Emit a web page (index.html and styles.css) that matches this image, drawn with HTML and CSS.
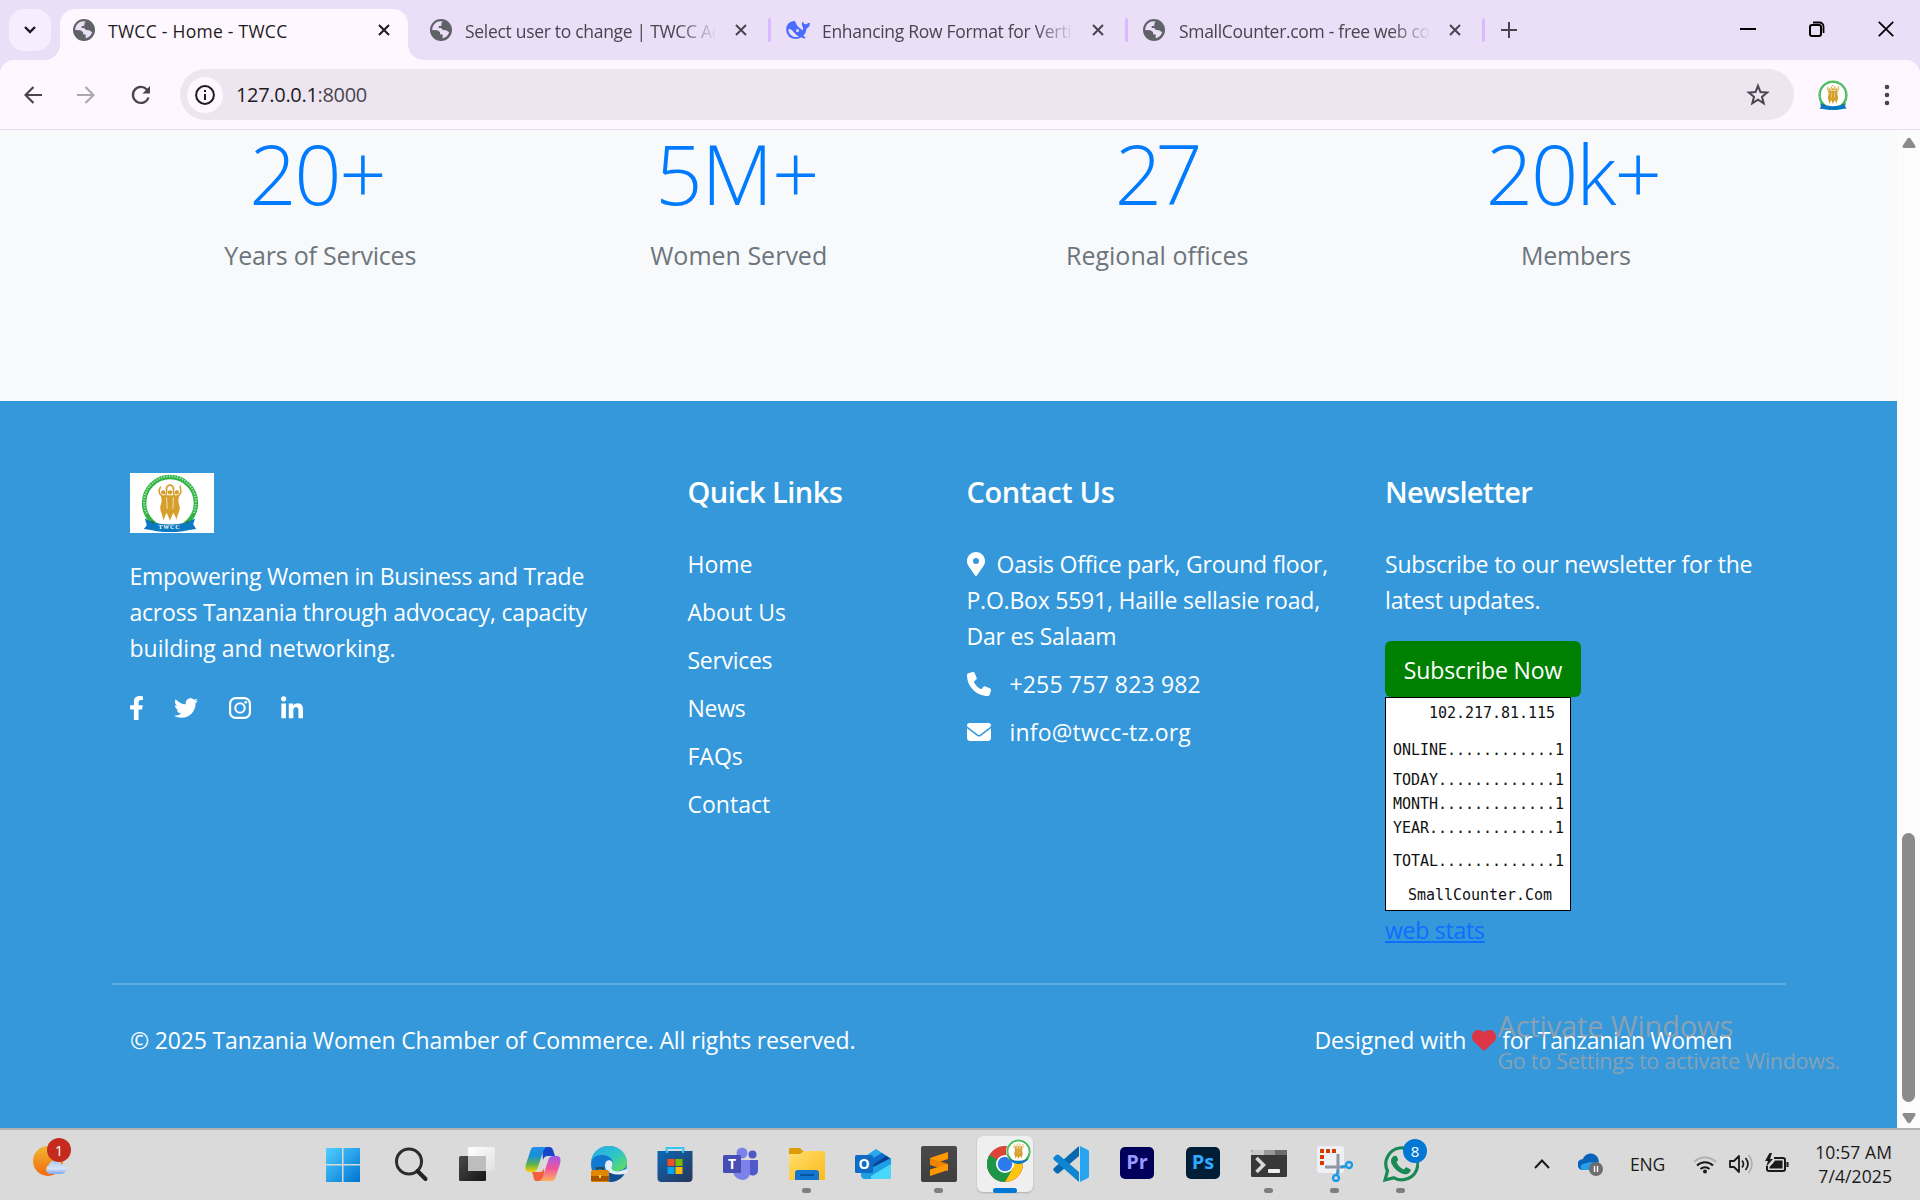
FILE: index.html
```html
<!DOCTYPE html>
<html lang="en">
<head>
<meta charset="utf-8">
<title>TWCC - Home - TWCC</title>
<link rel="stylesheet" href="styles.css">
</head>
<body>
<svg class="defs" width="0" height="0">
  <defs>
    <linearGradient id="gWin" x1="0" y1="0" x2="1" y2="1"><stop offset="0" stop-color="#4fd0ff"/><stop offset="1" stop-color="#0073d1"/></linearGradient>
    <linearGradient id="gSun" x1="0" y1="0" x2="0" y2="1"><stop offset="0" stop-color="#f0b830"/><stop offset="1" stop-color="#f26a10"/></linearGradient>
    <linearGradient id="gCloud" x1="0" y1="0" x2="0" y2="1"><stop offset="0" stop-color="#a9c5f4"/><stop offset=".6" stop-color="#d6e4fb"/><stop offset="1" stop-color="#7fa5e8"/></linearGradient>
    <linearGradient id="gDark" x1="0" y1="0" x2="1" y2="1"><stop offset="0" stop-color="#4a4a4a"/><stop offset="1" stop-color="#161616"/></linearGradient>
    <linearGradient id="gLight" x1="0" y1="0" x2="1" y2="1"><stop offset="0" stop-color="#fff"/><stop offset="1" stop-color="#e0e0e0"/></linearGradient>
    <linearGradient id="gCopA" x1="0" y1="0" x2="0" y2="1"><stop offset="0" stop-color="#2390e8"/><stop offset=".35" stop-color="#1590d8"/><stop offset=".7" stop-color="#62b44b"/><stop offset="1" stop-color="#ffd000"/></linearGradient>
    <linearGradient id="gCopB" x1="0" y1="0" x2="0" y2="1"><stop offset="0" stop-color="#a05ae8"/><stop offset=".5" stop-color="#f0559a"/><stop offset="1" stop-color="#ffb060"/></linearGradient>
    <linearGradient id="gEdge" x1="0" y1="0" x2="1" y2="1"><stop offset="0" stop-color="#2aa9ea"/><stop offset=".5" stop-color="#2cc4c8"/><stop offset="1" stop-color="#6be04a"/></linearGradient>
    <linearGradient id="gStore" x1="0" y1="0" x2="1" y2="1"><stop offset="0" stop-color="#0a68b8"/><stop offset="1" stop-color="#2a3558"/></linearGradient>
    <linearGradient id="gFolder" x1="0" y1="0" x2="1" y2="1"><stop offset="0" stop-color="#ffdf70"/><stop offset="1" stop-color="#fcba18"/></linearGradient>
    <linearGradient id="gSub" x1="0" y1="0" x2="0" y2="1"><stop offset="0" stop-color="#4a4a4a"/><stop offset="1" stop-color="#3e3e3e"/></linearGradient>
    <symbol id="globe" viewBox="0 0 22 22">
      <circle cx="11" cy="11" r="11" fill="#5f6368"/>
      <path d="M12.6 2.2 8.4 2.6C4.6 4 2.2 7.200 2.200 11l5.200.2 2.600 1.800.1 2.200 2.500.200.1 3.900c3-.5 5.600-2.900 6.400-6l-2.900-2.100-3.200-.2-1.900-2H8.700V6.900h2.500l.2-2.400z" fill="#ebdef7"/>
    </symbol>
    <symbol id="close" viewBox="0 0 12 12"><path d="M1 1l10 10M11 1L1 11" fill="none" stroke="currentColor" stroke-width="2"/></symbol>
    <symbol id="seal" viewBox="0 0 60 60">
      <circle cx="30" cy="30" r="26.800" fill="#fff" stroke="#2fb344" stroke-width="4.600"/>
      <path d="M6 41A26.800 26.800 0 1 1 54 41" fill="none" stroke="#fff" stroke-width="2.200" stroke-dasharray="1.300 1.500" stroke-opacity=".6"/>
      <g fill="#d69e2b">
        <circle cx="23" cy="19" r="2.300"/><circle cx="30" cy="19" r="2.300"/><circle cx="37" cy="19" r="2.300"/>
        <path d="M20.500 22h19l-.8 5c-.5 3 1.800 5 1.300 9 0 3-2 5-3 11l-3.500-7L30 48l-3.500-8-3.500 8c-1-7-3-9-3-12-.5-4 1.800-6 1.300-9z"/>
      </g>
      <g fill="none" stroke="#d69e2b" stroke-width="1.600">
        <path d="M22 23c-3-2-4-4-3-7l1.500-3M38 23c3-2 4-4 3-7l-.5-4M25.500 23c1-3 1.500-5 1-8M34.500 23c-1-3-1.500-5-1-8"/>
        <path d="M26 16c1-6 7-6 8 0"/>
      </g>
      <path d="M26.500 24l.5 12M33.500 24l-.5 12" stroke="#fff" stroke-width=".7"/>
      <path d="M4 46l8 4c12 3 24 3 36 0l8-4-2 6 3 5-7 1c-13 3-27 3-40 0l-7-1 3-4z" fill="#0b79c1"/>
      <path d="M9 48l4 1.500v2zM51 48l-4 1.500v2z" fill="#444"/>
    </symbol>
  </defs>
</svg>

<div class="tabstrip">
  <div class="tab-search"><svg width="14" height="10" viewBox="0 0 14 10"><path d="M2 2l5 5 5-5" fill="none" stroke="#1d1b20" stroke-width="2.400"/></svg></div>
  <div class="tab tab-active">
    <svg class="fav" width="22" height="22"><use href="#globe"/></svg>
    <span class="tab-title t1">TWCC - Home - TWCC</span>
    <svg class="tab-x" width="12" height="12"><use href="#close"/></svg>
  </div>
  <div class="tab">
    <svg class="fav" width="22" height="22"><use href="#globe"/></svg>
    <span class="tab-title fade t2">Select user to change | TWCC Admin</span>
    <svg class="tab-x" width="12" height="12"><use href="#close"/></svg>
  </div>
  <div class="tab sep">
    <svg class="fav" width="24" height="20" viewBox="0 0 24 20"><path d="M9 1C3 1 0 5 .2 10c.3 5 4 9 9.300 9 2.500 0 4-.6 5.500-1.700 1.500 1 3.500 1.500 5 .7l-2.700-2.200c2-2 3-4.600 3.200-7.300 2-.6 3.300-2.500 3.500-5.500-1.600-.3-3 .2-3.900 1.500-1.500-.2-2.500-1-3.300-3-1.300 1.700-1.300 3.700 0 5.500.3 1.500.2 2.500-.3 3.500C14 8 11 6 10.500 4.500z" fill="#4d6bfe"/><path d="M2.500 9c4-1 6 6 10.500 7.500C8 18.500 2 15 2.500 9z" fill="#ebdef7"/><circle cx="11.500" cy="10.500" r="1.500" fill="#ebdef7"/></svg>
    <span class="tab-title fade t3">Enhancing Row Format for Vertical</span>
    <svg class="tab-x" width="12" height="12"><use href="#close"/></svg>
  </div>
  <div class="tab sep">
    <svg class="fav" width="22" height="22"><use href="#globe"/></svg>
    <span class="tab-title fade t4">SmallCounter.com - free web counter</span>
    <svg class="tab-x" width="12" height="12"><use href="#close"/></svg>
  </div>
  <div class="new-tab sep"><svg width="16" height="16" viewBox="0 0 16 16"><path d="M8 0v16M0 8h16" stroke="#49454f" stroke-width="2"/></svg></div>
  <div class="win-buttons">
    <svg width="16" height="16" viewBox="0 0 16 16"><path d="M0 8h16" stroke="#000" stroke-width="2"/></svg>
    <svg width="16" height="16" viewBox="0 0 16 16"><rect x="1" y="4" width="11" height="11" rx="2" fill="none" stroke="#000" stroke-width="2"/><path d="M4 1.500h6.500a4 4 0 0 1 4 4V12" fill="none" stroke="#000" stroke-width="1.800"/></svg>
    <svg width="16" height="16" viewBox="0 0 16 16"><path d="M.8.8l14.400 14.400M15.200.8L.8 15.200" stroke="#000" stroke-width="1.800"/></svg>
  </div>
</div>

<div class="toolbar-bg">
  <div class="toolbar">
    <svg width="18" height="18" viewBox="0 0 18 18"><path d="M18 9H2M9.500 1L1.500 9l8 8" fill="none" stroke="#49454f" stroke-width="2.200"/></svg>
    <svg width="18" height="18" viewBox="0 0 18 18"><path d="M0 9h16M8.500 1l8 8-8 8" fill="none" stroke="#aba7af" stroke-width="2.200"/></svg>
    <svg width="20" height="20" viewBox="0 0 20 20"><path d="M17.500 12.500A8 8 0 1 1 15.800 4.500L18 7" fill="none" stroke="#49454f" stroke-width="2.300"/><path d="M19 1v7.500h-7.500z" fill="#49454f"/></svg>
    <div class="omnibox">
      <div class="info"><svg width="20" height="20" viewBox="0 0 20 20"><circle cx="10" cy="10" r="8.900" fill="none" stroke="#1d1b20" stroke-width="2"/><path d="M10 9v6M10 5v2" stroke="#1d1b20" stroke-width="2"/></svg></div>
      <span class="url">127.0.0.1<span class="port">:8000</span></span>
      <svg class="star" width="24" height="23" viewBox="0 0 24 23"><path d="M12 2.800l2.500 6.300 6.700.5-5.200 4.200 1.700 6.500-5.700-3.600-5.700 3.600L8 13.800 2.800 9.600l6.700-.5z" fill="none" stroke="#49454f" stroke-width="2"/></svg>
    </div>
    <svg class="avatar" width="30" height="30"><use href="#seal"/></svg>
    <svg width="6" height="24" viewBox="0 0 6 24"><g fill="#49454f"><circle cx="3" cy="4" r="2.300"/><circle cx="3" cy="12" r="2.300"/><circle cx="3" cy="20" r="2.300"/></g></svg>
  </div>
</div>

<div class="viewport">
  <main class="page">
    <section class="stats">
      <div><p class="num n1">20+</p><p class="label l1">Years of Services</p></div>
      <div><p class="num n2">5M+</p><p class="label">Women Served</p></div>
      <div><p class="num n3">27</p><p class="label">Regional offices</p></div>
      <div><p class="num n4">20k+</p><p class="label l4">Members</p></div>
    </section>
    <footer class="footer">
      <div class="cols">
        <div class="col about">
          <div class="brand"><svg width="60" height="60"><use href="#seal"/></svg><span class="brand-text">TWCC</span></div>
          <p><span class="b1">Empowering Women in Business and Trade</span><br><span class="b2">across Tanzania through advocacy, capacity</span><br>building and networking.</p>
          <div class="social">
            <svg width="15" height="24" viewBox="0 0 320 512"><path d="M279.140 288l14.220-92.660h-88.910v-60.130c0-25.350 12.420-50.060 52.240-50.060h40.420V6.260S260.430 0 225.360 0c-73.220 0-121.080 44.380-121.080 124.720v70.620H22.890V288h81.390v224h100.170V288z"/></svg>
            <svg width="24" height="24" viewBox="0 0 512 512"><path d="M459.370 151.716c.325 4.548.325 9.097.325 13.645 0 138.720-105.583 298.558-298.558 298.558-59.452 0-114.680-17.219-161.137-47.106 8.447.974 16.568 1.299 25.340 1.299 49.055 0 94.213-16.568 130.274-44.832-46.132-.975-84.792-31.188-98.112-72.772 6.498.974 12.995 1.624 19.818 1.624 9.421 0 18.843-1.300 27.614-3.573-48.081-9.747-84.143-51.980-84.143-102.985v-1.299c13.969 7.797 30.214 12.670 47.431 13.319-28.264-18.843-46.781-51.005-46.781-87.391 0-19.492 5.197-37.360 14.294-52.954 51.655 63.675 129.300 105.258 216.365 109.807-1.624-7.797-2.599-15.918-2.599-24.040 0-57.828 46.782-104.934 104.934-104.934 30.213 0 57.502 12.670 76.670 33.137 23.715-4.548 46.456-13.320 66.599-25.340-7.798 24.366-24.366 44.833-46.132 57.827 21.117-2.273 41.584-8.122 60.426-16.243-14.292 20.791-32.161 39.308-52.628 54.253z"/></svg>
            <svg width="22" height="24" viewBox="0 0 22 24"><rect x="1.100" y="2.100" width="19.800" height="19.800" rx="5.500" fill="none" stroke="#fff" stroke-width="2.200"/><circle cx="11" cy="12" r="4.700" fill="none" stroke="#fff" stroke-width="2.100"/><circle cx="16.700" cy="6.300" r="1.400"/></svg>
            <svg width="22" height="24" viewBox="0 0 448 480"><path d="M100.280 448H7.400V148.900h92.880zM53.790 108.100C24.090 108.100 0 83.500 0 53.800a53.790 53.790 0 0 1 107.580 0c0 29.700-24.100 54.300-53.790 54.300zM447.900 448h-92.680V302.400c0-34.700-.7-79.200-48.290-79.200-48.290 0-55.690 37.700-55.690 76.700V448h-92.780V148.900h89.080v40.800h1.300c12.400-23.500 42.690-48.300 87.880-48.300 94 0 111.280 61.900 111.280 142.300V448z"/></svg>
          </div>
        </div>
        <div class="col links">
          <h5 class="h1">Quick Links</h5>
          <a>Home</a><a>About Us</a><a class="tight">Services</a><a class="tight">News</a><a>FAQs</a><a>Contact</a>
        </div>
        <div class="col contact">
          <h5 class="h2">Contact Us</h5>
          <p class="addr"><svg class="ic pin" width="18" height="24" viewBox="0 0 384 512"><path fill-rule="evenodd" d="M172.268 501.670C26.970 291.031 0 269.413 0 192 0 85.961 85.961 0 192 0s192 85.961 192 192c0 77.413-26.970 99.031-172.268 309.670-9.535 13.774-29.930 13.773-39.464 0zM192 256a64 64 0 1 0 0-128 64 64 0 0 0 0 128z"/></svg>Oasis Office park, Ground floor,<br>P.O.Box 5591, Haille sellasie road,<br>Dar es Salaam</p>
          <p class="phone"><svg class="ic" width="24" height="24" viewBox="0 0 512 512"><path d="M164.900 24.600c-7.700-18.600-28-28.500-47.400-23.200l-88 24C12.100 30.200 0 46 0 64C0 311.400 200.600 512 448 512c18 0 33.800-12.100 38.600-29.500l24-88c5.300-19.400-4.600-39.700-23.200-47.400l-96-40c-16.300-6.800-35.200-2.100-46.300 11.600L304.700 368C234.300 334.700 177.300 277.700 144 207.300L193.300 167c13.700-11.200 18.400-30 11.600-46.300l-40-96z"/></svg>+255 757 823 982</p>
          <p class="mail"><svg class="ic" width="24" height="24" viewBox="0 0 512 512"><path d="M48 64C21.500 64 0 85.500 0 112c0 15.100 7.100 29.300 19.200 38.400L236.800 313.600c11.400 8.500 27 8.500 38.400 0L492.800 150.400c12.100-9.100 19.200-23.300 19.200-38.400c0-26.500-21.500-48-48-48H48zM0 176V384c0 35.300 28.700 64 64 64H448c35.300 0 64-28.700 64-64V176L294.400 339.200c-22.800 17.100-54 17.100-76.800 0L0 176z"/></svg>info@twcc-tz.org</p>
        </div>
        <div class="col news">
          <h5 class="h3">Newsletter</h5>
          <p>Subscribe to our newsletter for the<br>latest updates.</p>
          <div class="btn">Subscribe Now</div>
          <div class="counter">
            <div class="ip">102.217.81.115</div>
            <div class="online">ONLINE............1</div>
            <div class="today">TODAY.............1</div>
            <div>MONTH.............1</div>
            <div>YEAR..............1</div>
            <div class="total">TOTAL.............1</div>
            <div class="site">SmallCounter.Com</div>
          </div>
          <a class="webstats">web stats</a>
        </div>
      </div>
      <div class="bottom">
        <span class="copy">© 2025 Tanzania Women Chamber of Commerce. All rights reserved.</span>
        <span class="made">Designed with <svg class="heart" width="24" height="24" viewBox="0 0 512 512"><path fill="#dc3545" d="M47.600 300.400L228.300 469.100c7.500 7 17.400 10.900 27.700 10.900s20.200-3.900 27.700-10.900L464.400 300.400c30.400-28.300 47.600-68 47.600-109.500v-5.800c0-69.900-50.500-129.500-119.400-141C347 36.500 300.600 51.400 268 84L256 96 244 84c-32.600-32.600-79-47.500-124.600-39.900C50.500 55.600 0 115.200 0 185.100v5.800c0 41.500 17.200 81.200 47.600 109.500z"/></svg> <span class="for">for Tanzanian Women</span></span>
      </div>
    </footer>
  </main>
  <div class="scrollbar">
    <svg width="14" height="12" viewBox="0 0 14 12"><path d="M5.500 1.500Q7 0 8.500 1.500L13.500 9Q14 11 12 11H2Q0 11 .5 9z" fill="#8b8b8b"/></svg>
    <div class="thumb"></div>
    <svg width="14" height="12" viewBox="0 0 14 12"><path d="M5.500 10.500Q7 12 8.500 10.500L13.500 3Q14 1 12 1H2Q0 1 .5 3z" fill="#8b8b8b"/></svg>
  </div>
  <div class="watermark"><div class="wm1">Activate Windows</div><div class="wm2">Go to Settings to activate Windows.</div></div>
</div>

<div class="taskbar">
  <div class="weather">
    <svg width="36" height="44" viewBox="0 0 36 44"><circle cx="15" cy="26" r="15" fill="url(#gSun)"/><path d="M16 39a5 5 0 0 1 0-9c1-6 11-6 12-1 6 0 7 9 1 10z" fill="url(#gCloud)"/></svg>
    <span class="badge red">1</span>
  </div>
  <div class="apps">
    <div class="app"><svg viewBox="0 0 36 36"><path d="M0 2h16v16H0zM17.500 2H34v16H17.500zM0 19.500h16V36H0zM17.500 19.500H34V36H17.500z" fill="url(#gWin)"/></svg></div>
    <div class="app"><svg viewBox="0 0 36 36"><circle cx="16" cy="15.500" r="12.500" fill="none" stroke="#2c2c2c" stroke-width="3"/><path d="M24.500 25l8 8" stroke="#222" stroke-width="4" stroke-linecap="round"/></svg></div>
    <div class="app"><svg viewBox="0 0 36 36"><rect y="10" width="27" height="25" rx="1.500" fill="url(#gDark)"/><rect x="9" y="1" width="27" height="24" rx="1.500" fill="url(#gLight)"/><path d="M9 10h18v15H9z" fill="#bdbdbd"/></svg></div>
    <div class="app"><svg viewBox="0 0 36 36"><path d="M17 1h7c3 0 4 2 5 6l1 3h-7c-3 0-4 1-5 4z" fill="#1745c8"/><path d="M19 35h-7c-3 0-3-2-4-6l-1-3h7c3 0 4-1 5-4z" fill="#f2603c"/><path d="M10 1h12c-3 1-4 4-5 8l-4 12c-1 4-3 5-6 5H4c-4 0-4-4-3-8l4-12c1-4 2-5 5-5z" fill="url(#gCopA)"/><path d="M26 35H14c3-1 4-4 5-8l4-12c1-4 3-5 6-5h3c4 0 4 4 3 8l-4 12c-1 4-2 5-5 5z" fill="url(#gCopB)"/></svg></div>
    <div class="app"><svg viewBox="0 0 36 36"><circle cx="18" cy="18" r="18" fill="#1179d0"/><path d="M0 15C2 4 10 0 18 0c11 0 18 8 18 16 0 7-6 9-11 9-4 0-6-2-4-5 3-6-3-11-9-11C6 9 2 11 0 15z" fill="url(#gEdge)"/><path d="M18 25c5 4 11 4 16 2-3 6-9 9-15 9z" fill="#114c91"/><path d="M14 20c0-9 10-6 7 0-2 4 2 6 8 5l7-2v4c-10 4-22 0-22-7z" fill="#e4eff5"/><rect y="24" width="18" height="12" rx="1.500" fill="#e08600"/><path d="M0 30h18v5H0z" fill="#a95500"/><path d="M6 24v-2h6v2" fill="none" stroke="#3b3327" stroke-width="1.500"/><path d="M8 29h2v3H8z" fill="#ffd43b"/></svg></div>
    <div class="app"><svg viewBox="0 0 36 36"><path d="M9.500 8V2h17v6" fill="none" stroke="#35c5f1" stroke-width="2"/><path d="M.5 5h35v27a4 4 0 0 1-4 4h-27a4 4 0 0 1-4-4z" fill="url(#gStore)"/><path d="M9 5h2v2H9zM25 5h2v2h-2z" fill="#35c5f1"/><path d="M10.500 13h7v7h-7z" fill="#f25022"/><path d="M18.500 13h7v7h-7z" fill="#7fba00"/><path d="M10.500 21h7v7h-7z" fill="#00a4ef"/><path d="M18.500 21h7v7h-7z" fill="#ffb900"/></svg></div>
    <div class="app"><svg viewBox="0 0 36 36"><circle cx="19" cy="7" r="5.500" fill="#7b83eb"/><circle cx="29.500" cy="8.500" r="4" fill="#5059c9"/><path d="M24 14h11v10c0 7-9 7-11 2z" fill="#5059c9"/><path d="M10 14h17v12c0 11-15 10-17 0z" fill="#7b83eb"/><rect y="9" width="18" height="18" rx="1.500" fill="#474db5"/></svg><b class="gl teams">T</b></div>
    <div class="app run"><svg viewBox="0 0 36 36"><path d="M0 3.500A1.500 1.500 0 0 1 1.500 2H11l4 4-3 4H0z" fill="#dc9d05"/><path d="M0 8h11l4-3h21v29H0z" fill="url(#gFolder)"/><path d="M6 34v-7a3 3 0 0 1 3-3h18a3 3 0 0 1 3 3v7z" fill="#1275cf"/><path d="M11 29h14" stroke="#0a4f96" stroke-width="1.800"/></svg></div>
    <div class="app"><svg viewBox="0 0 36 36"><path d="M6 13L21 3l14 9v6L18 30 6 25z" fill="#28a8ea"/><path d="M15 14l12-7 9 6v5l-17 8z" fill="#0c6acb"/><path d="M18 19l13-9 5 3v5l-16 8z" fill="#063f91"/><path d="M6 27l30-15v17c0 3-1 4-4 4H10c-3 0-4-2-4-4z" fill="#1f9ee5"/><path d="M16 30l20-12v11c0 3-1 4-4 4H16z" fill="#49d8fb"/><rect y="9" width="18" height="18" rx="1.500" fill="#0f6cc5"/></svg><b class="gl teams">O</b></div>
    <div class="app run"><svg viewBox="0 0 36 36"><rect width="36" height="36" rx="2" fill="url(#gSub)"/><path d="M9 12l18-6v7l-18 6z" fill="#ff9800"/><path d="M9 12l18 6v7L9 19z" fill="#ef8400"/><path d="M9 23.500l18-5.500v6L9 30z" fill="#ff9800"/></svg></div>
    <div class="app active"><svg viewBox="0 0 36 36"><circle cx="18" cy="18" r="18" fill="#db4437"/><path d="M18 18L2.400 9A18 18 0 0 0 18 36l8-13z" fill="#1e9648"/><path d="M18 10h16A18 18 0 0 1 18 36l8-14z" fill="#fdc50f"/><circle cx="18" cy="18" r="9" fill="#fff"/><circle cx="18" cy="18" r="7.300" fill="#3079ed"/></svg><svg class="mini" viewBox="0 0 60 60"><use href="#seal"/></svg></div>
    <div class="app"><svg viewBox="0 0 36 36"><path d="M26 0v10L6 27c-1 .8-2 .6-3 0l-2-2c-1-1-1-2 0-3z" fill="#0869b1"/><path d="M26 36V26L6 9C5 8.200 4 8.400 3 9l-2 2c-1 1-1 2 0 3z" fill="#0e85d0"/><path d="M27 0l8 4c.7.400 1 1 1 2v24c0 1-.3 1.600-1 2l-8 4z" fill="#26a4ef"/></svg></div>
    <div class="app"><svg viewBox="0 0 36 36"><rect x="1" y="1" width="34" height="32" rx="5" fill="#00005b"/></svg><b class="gl pr">Pr</b></div>
    <div class="app"><svg viewBox="0 0 36 36"><rect x="1" y="1" width="34" height="32" rx="5" fill="#001e36"/></svg><b class="gl ps">Ps</b></div>
    <div class="app run"><svg viewBox="0 0 36 36"><rect y="4" width="36" height="27" rx="1.500" fill="#383838"/><path d="M1.500 4H13v5H0V5.500z" fill="#c8c8c8"/><path d="M13 4h11v5H13z" fill="#999"/><path d="M24 4h12v5H24z" fill="#6b6b6b"/><path d="M5.500 12l7 7-7 7" fill="none" stroke="#d8d8d8" stroke-width="3.500"/><rect x="17" y="23" width="12" height="4" rx="1" fill="#eee"/></svg></div>
    <div class="app run"><svg viewBox="0 0 36 36"><rect width="27" height="27" rx="3" fill="#eef0f3"/><path d="M5 19V5h15" fill="none" stroke="#d83b01" stroke-width="4" stroke-dasharray="4 2"/><path d="M21 8v20M8 21h20" stroke="#8d96a2" stroke-width="3"/><circle cx="32" cy="19" r="3" fill="none" stroke="#1c9be6" stroke-width="2.400"/><circle cx="19" cy="32" r="3" fill="none" stroke="#1c9be6" stroke-width="2.400"/><path d="M24 21l5-1M21 24l-1 5" stroke="#1c9be6" stroke-width="2.400"/></svg></div>
    <div class="app run"><svg viewBox="0 0 36 36"><path d="M2 34l2.500-9A16 16 0 1 1 11 31.800z" fill="none" stroke="#1a8a55" stroke-width="3.200"/><path d="M11 10c2-1 3 0 4 3 .5 1-.5 2-1.500 3 2 4 4 6 7.500 7.500 1.500-2 2-2.500 3-2 4 2 4.500 2 3 4.500-3 4-8 2-11 0-5-3-12-12-5-16z" fill="#1a8a55"/></svg><span class="badge blue">8</span></div>
  </div>
  <div class="tray">
    <svg class="chev" width="16" height="10" viewBox="0 0 16 10"><path d="M1 9l7-7.500L15 9" fill="none" stroke="#1a1a1a" stroke-width="2"/></svg>
    <svg class="drive" width="26" height="26" viewBox="0 0 26 26"><path d="M5 19a5.500 5.500 0 0 1 0-11c2-6 11-8 15-1l1 4-10 8z" fill="#0864b8"/><path d="M5 19c-3-1-3-5 0-6l7-2 11 2v6z" fill="#28a0e8"/><circle cx="18" cy="18" r="7" fill="#6e6e6e"/><path d="M16.500 15v6M19.500 15v6" stroke="#fff" stroke-width="1.400"/></svg>
    <span class="lang">ENG</span>
    <svg class="wifi" width="24" height="22" viewBox="0 0 24 22"><path d="M1 9a15.500 15.500 0 0 1 22 0" fill="none" stroke="#b0b0b0" stroke-width="2"/><path d="M4 12.500a11.500 11.500 0 0 1 16 0M7.500 16a6.500 6.500 0 0 1 9 0" fill="none" stroke="#1a1a1a" stroke-width="2"/><circle cx="12" cy="18.500" r="2" fill="#1a1a1a"/></svg>
    <svg class="vol" width="25" height="22" viewBox="0 0 25 22"><path d="M1 8h4l5-5v16l-5-5H1z" fill="none" stroke="#1a1a1a" stroke-width="1.800" stroke-linejoin="round"/><path d="M13 7.500q3 3.500 0 7M16.500 5q5 6 0 12" fill="none" stroke="#1a1a1a" stroke-width="1.700"/><path d="M19.500 2q7 9 0 18" fill="none" stroke="#b0b0b0" stroke-width="1.700"/></svg>
    <svg class="bat" width="26" height="22" viewBox="0 0 26 22"><path d="M10 5h9a2 2 0 0 1 2 2v9a2 2 0 0 1-2 2H5a2 2 0 0 1-2-2v-3" fill="none" stroke="#1a1a1a" stroke-width="2"/><path d="M11 7.500h7.500v8H5.500V14L10 9zM22.500 9h2v5h-2z" fill="#1a1a1a"/><path d="M5.500 0L1 8h3l-2 6 7-8H6l2-6z" fill="#1a1a1a"/></svg>
    <div class="clock"><div class="time">10:57 AM</div><div class="date">7/4/2025</div></div>
  </div>
</div>
</body>
</html>
```
FILE: styles.css
```css
* { box-sizing: border-box; margin: 0; padding: 0; }
body {
  width: 1920px; height: 1200px; overflow: hidden;
  display: flex; flex-direction: column;
  font-family: "Open Sans", "Noto Sans", sans-serif;
  background: #ebdef7;
}
.defs { position: absolute; }
svg { display: block; flex: none; }

/* browser tabs */
.tabstrip { height: 60px; flex: none; display: flex; align-items: flex-start; padding: 9px 0 0 9px; }
.tab-search { width: 42px; height: 42px; margin-right: 9px; border-radius: 15px; background: #f8edff; display: flex; align-items: center; justify-content: center; }
.tab { position: relative; width: 357px; height: 42px; display: flex; align-items: center; padding-left: 22px; color: #49454f; }
.tab-active { width: 348px; height: 51px; padding: 0 0 9px 13px; background: #fef7ff; border-radius: 15px 15px 0 0; color: #1d1b20; }
.tab-active::before, .tab-active::after { content: ""; position: absolute; bottom: 0; width: 15px; height: 15px; }
.tab-active::before { left: -15px; background: radial-gradient(circle at 0 0, transparent 14.5px, #fef7ff 15px); }
.tab-active::after { right: -15px; background: radial-gradient(circle at 100% 0, transparent 14.5px, #fef7ff 15px); }
.sep::before { content: ""; position: absolute; left: 0; top: 9px; width: 3px; height: 24px; border-radius: 2px; background: #d9b9ff; }
.tab-active + .tab { width: 360px; }
.sep .fav { margin-left: -4px; }
.fav { margin-right: 13px; }
.tab-title { width: 250px; font-size: 17.5px; line-height: 24px; white-space: nowrap; overflow: hidden; letter-spacing: -.3px; padding-top: 1px; }
.tab-active .tab-title { width: 270px; letter-spacing: .27px; }
.t3 { margin-left: -1px; }
.t4 { margin-left: 1px; }
.fade { -webkit-mask-image: linear-gradient(90deg, #000 85%, transparent 101%); mask-image: linear-gradient(90deg, #000 85%, transparent 101%); }
.tab-x { margin-left: 20px; }
.tab-active .tab-x { margin-left: 0; }
.new-tab { position: relative; height: 42px; display: flex; align-items: center; padding-left: 19px; }
.win-buttons { margin-left: auto; display: flex; gap: 53px; padding: 12px 26px 0 0; }

/* toolbar */
.toolbar-bg { height: 70px; flex: none; background: #ebdef7; }
.toolbar { height: 70px; background: #fef7ff; border-radius: 14px 14px 0 0; border-bottom: 1px solid #e7e0ec; display: flex; align-items: center; padding: 0 30px 0 24px; }
.toolbar > svg:nth-child(2) { margin-left: 35px; }
.toolbar > svg:nth-child(3) { margin-left: 36px; }
.omnibox { width: 1614px; height: 51px; margin-left: 29px; border-radius: 26px; background: #ede6f1; display: flex; align-items: center; padding: 0 24px 0 7px; }
.info { width: 36px; height: 36px; border-radius: 50%; background: #fef7ff; display: flex; align-items: center; justify-content: center; }
.url { flex: 1; margin-left: 13px; font-size: 20px; letter-spacing: -.32px; color: #1d1b20; }
.port { color: #49454f; }
.avatar { margin-left: 24px; margin-right: 36px; }

/* page viewport */
.viewport { position: relative; height: 998px; flex: none; display: flex; }
.page { width: 1897px; display: flex; flex-direction: column; color: #fff; font-size: 23px; line-height: 36px; }
.stats { height: 271px; background: #f8f9fa; display: grid; grid-template-columns: repeat(4, 418.5px); padding: 0 111px; text-align: center; }
.num { font-size: 83px; font-weight: 300; line-height: 100px; color: #007bff; margin-top: -7px; }
.n1 { letter-spacing: -2.4px; padding-right: 7px; }
.n2 { letter-spacing: -1.2px; padding-right: 4px; }
.n3 { letter-spacing: -7px; padding-right: 4px; }
.n4 { letter-spacing: -2.1px; padding-right: 6px; }
.label { font-size: 25px; line-height: 40px; color: #6c757d; margin-top: 12px; }
.l1, .l4 { letter-spacing: -.2px; }
.footer { flex: 1; background: #3498db; padding: 72px 111px 0 112px; }
.cols { display: grid; grid-template-columns: 558px 279px 418.5px 418.5px; height: 510px; }
.col { padding-left: 17.5px; white-space: nowrap; }
.col h5 { font-size: 29px; line-height: 36px; font-weight: 600; padding-top: 1px; margin-bottom: 36px; }
.h1 { letter-spacing: -.55px; }
.h2 { letter-spacing: -.4px; }
.h3 { letter-spacing: -.7px; }
.brand { position: relative; width: 84px; height: 60px; background: #fff; padding-left: 11px; }
.brand svg { width: 58px; height: 59px; padding-top: 1px; }
.brand-text { position: absolute; left: 29px; top: 51px; color: #fff; font: bold 6px/7px "Liberation Serif", serif; letter-spacing: .8px; }
.about { margin-top: -.5px; }
.about p { margin-top: 25px; }
.b1 { letter-spacing: -.28px; }
.b2 { letter-spacing: -.22px; }
.social { display: flex; margin-top: 30px; margin-left: -.5px; fill: #fff; }
.social svg:nth-child(2) { margin-left: 30px; }
.social svg:nth-child(3) { margin-left: 31px; }
.social svg:nth-child(4) { margin-left: 29.5px; }
.links a { display: block; margin-bottom: 12px; }
.links .tight { letter-spacing: -.3px; }
.contact p { margin-bottom: 12px; }
.addr { letter-spacing: -.22px; }
.phone { letter-spacing: .15px; }
.mail { letter-spacing: .2px; }
.ic { display: inline-block; vertical-align: -3px; margin-right: 19px; fill: #fff; }
.pin { margin-right: 12px; }
.news p { letter-spacing: -.18px; }
.btn { width: 196px; height: 56px; margin-top: 23px; border-radius: 6px; background: green; text-align: center; line-height: 58px; letter-spacing: -.1px; }
.counter { width: 186px; height: 214px; background: #fff; border: 1.5px solid #000; padding: 3px 0 0 7px; color: #111; font: 15px/24px "DejaVu Sans Mono", monospace; letter-spacing: -.03px; }
.counter .ip { padding-left: 36px; }
.counter .online { margin-top: 13px; }
.counter .today { margin-top: 6px; }
.counter .total { margin-top: 9px; }
.counter .site { padding-left: 15px; margin-top: 10px; }
.webstats { display: block; margin-top: 1px; color: #0d6efd; text-decoration: underline; letter-spacing: -.25px; }
.bottom { height: 110px; border-top: 2px solid #5dade2; display: flex; justify-content: space-between; padding: 37px 54px 0 18px; white-space: nowrap; }
.copy { letter-spacing: -.165px; }
.heart { display: inline-block; vertical-align: -3px; }
.for { letter-spacing: -.34px; }
.scrollbar { width: 23px; background: #fcfcfc; display: flex; flex-direction: column; align-items: center; padding: 7px 0 4px; }
.thumb { width: 13px; height: 269px; margin: 684px 0 auto; border-radius: 7px; background: #8b8b8b; }
.watermark { position: absolute; left: 1497.5px; top: 876px; color: rgba(165,165,165,.75); white-space: nowrap; }
.wm1 { font-size: 29px; line-height: 40px; letter-spacing: -.15px; }
.wm2 { font-size: 21.5px; line-height: 30px; letter-spacing: -.28px; }

/* taskbar */
.taskbar { height: 72px; flex: none; background: #dadada; border-top: 2px solid #b2b2b2; display: flex; position: relative; }
.weather { position: relative; width: 282px; padding: 5px 0 0 33px; }
.badge { position: absolute; border-radius: 50%; color: #fff; width: 24px; height: 24px; font-size: 15px; line-height: 24px; text-align: center; }
.red { left: 47px; top: 8px; background: #c42b1c; }
.blue { right: 2px; top: 3px; background: #0078d4; }
.apps { display: flex; gap: 10px; padding: 6px 0 0 35px; }
.app { position: relative; width: 56px; height: 56px; padding: 10px; border-radius: 6px; }
.app:first-child { padding-left: 9px; }
.app > svg { width: 36px; height: 36px; }
.app.active { background: #efefef; box-shadow: 0 1px 2px rgba(0,0,0,.2); }
.app.run::after, .app.active::after { content: ""; position: absolute; left: 23px; bottom: -1px; width: 9px; height: 5px; border-radius: 3px; background: #7e7e7e; }
.app.active::after { left: 16px; width: 24px; background: #0078d4; }
.app > .mini { position: absolute; right: 2px; top: 3px; width: 25px; height: 25px; background: #fff; border-radius: 50%; }
.gl { position: absolute; left: 10px; top: 19px; width: 18px; text-align: center; color: #fff; font-size: 14px; line-height: 18px; }
.gl.pr, .gl.ps { width: 36px; top: 14px; font-size: 20px; line-height: 24px; color: #9999ff; }
.gl.ps { color: #31a8ff; }
.tray { margin-left: auto; display: flex; align-items: center; padding: 0 28px 2px 0; color: #1a1a1a; font-size: 17.5px; white-space: nowrap; }
.drive { margin-left: 28px; }
.lang { width: 35px; margin-left: 26px; letter-spacing: -.2px; }
.wifi { margin-left: 28px; }
.vol { margin-left: 12px; }
.bat { margin-left: 10px; }
.clock { width: 102px; text-align: right; line-height: 24px; letter-spacing: .1px; padding-bottom: 1px; }
```
